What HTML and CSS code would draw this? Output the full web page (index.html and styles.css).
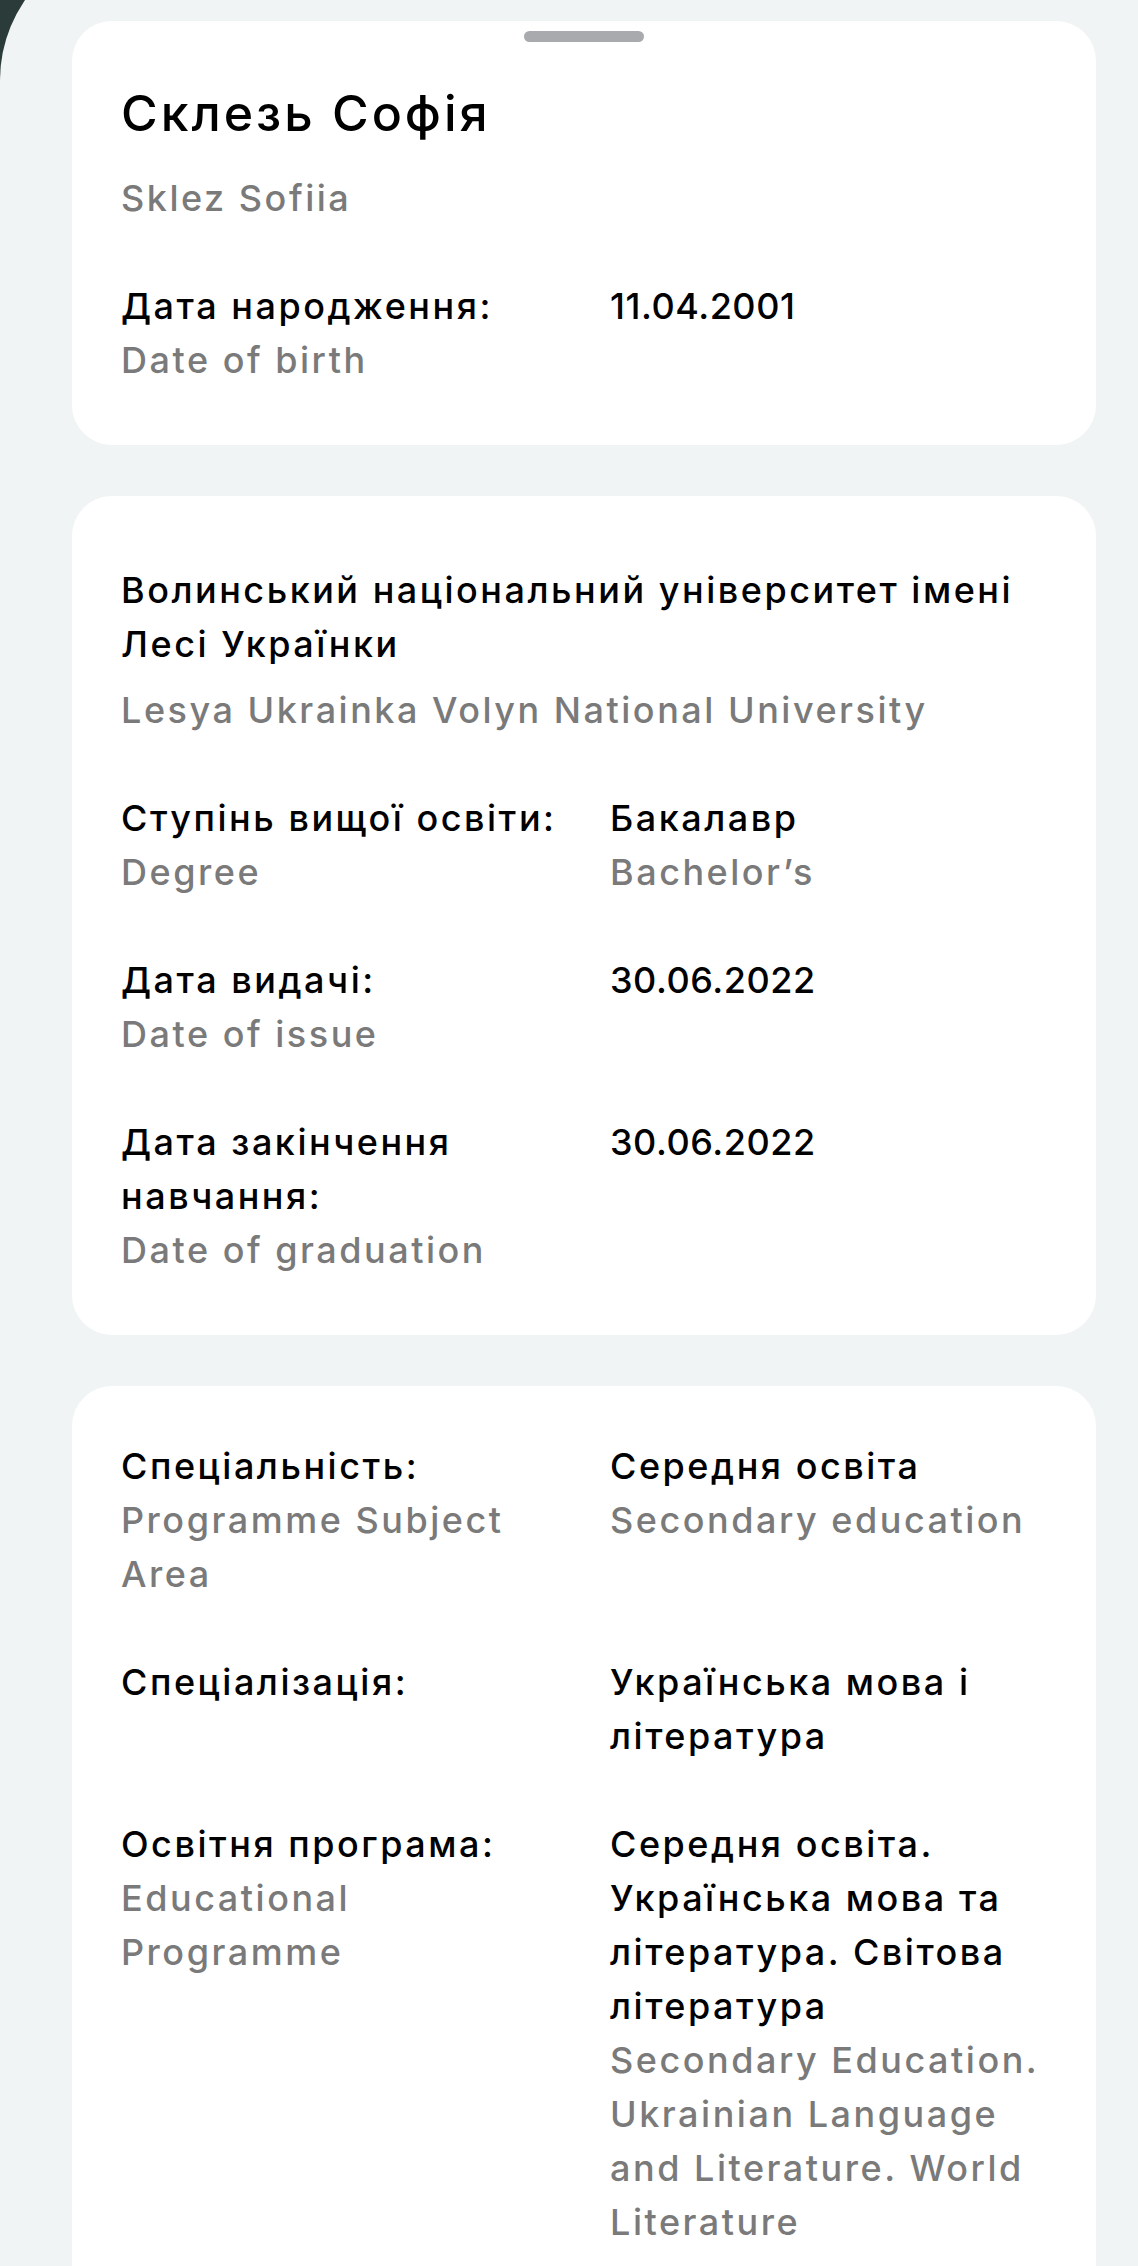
FILE: index.html
```html
<!DOCTYPE html>
<html lang="uk">
<head>
    <meta charset="UTF-8">
    <meta name="viewport" content="width=device-width, initial-scale=1.0">
    <title>Диплом</title>
    <link rel="stylesheet" href="styles.css">
</head>
<body>
    <div class="sheet">
        <!-- owner -->
        <div class="card card-top">
            <div class="handle"></div>
            <h1 class="owner">Склезь Софія</h1>
            <div class="owner-en">Sklez Sofiia</div>
            <div class="rows">
                <div class="row">
                    <div class="label">Дата народження:<span class="en">Date of birth</span></div>
                    <div class="value date">11.04.2001</div>
                </div>
            </div>
        </div>

        <!-- diploma -->
        <div class="card">
            <div class="org">Волинський національний університет імені Лесі Українки</div>
            <div class="org-en">Lesya Ukrainka Volyn National University</div>
            <div class="rows">
                <div class="row">
                    <div class="label">Ступінь вищої освіти:<span class="en">Degree</span></div>
                    <div class="value">Бакалавр<span class="en">Bachelor’s</span></div>
                </div>
                <div class="row">
                    <div class="label">Дата видачі:<span class="en">Date of issue</span></div>
                    <div class="value date">30.06.2022</div>
                </div>
                <div class="row">
                    <div class="label">Дата закінчення навчання:<span class="en">Date of graduation</span></div>
                    <div class="value date">30.06.2022</div>
                </div>
            </div>
        </div>

        <!-- programme -->
        <div class="card">
            <div class="rows">
                <div class="row">
                    <div class="label">Спеціальність:<span class="en">Programme Subject Area</span></div>
                    <div class="value">Середня освіта<span class="en">Secondary education</span></div>
                </div>
                <div class="row">
                    <div class="label">Спеціалізація:</div>
                    <div class="value">Українська мова і література</div>
                </div>
                <div class="row">
                    <div class="label">Освітня програма:<span class="en">Educational Programme</span></div>
                    <div class="value">Середня освіта. Українська мова та література. Світова література<span class="en">Secondary Education. Ukrainian Language and Literature. World Literature</span></div>
                </div>
            </div>
        </div>
    </div>
</body>
</html>
```

FILE: styles.css
```css
html, body {
    margin: 0;
    height: 100%;
    overflow: hidden;
}
body {
    background: #2a3b3a;
    font-family: Inter, "Noto Sans", sans-serif;
    color: #000;
}
.sheet {
    margin-top: -60px;
    min-height: 2400px;
    background: #f1f4f5;
    border-top-left-radius: 140px;
    padding: 81px 42px 0 72px;
    display: flex;
    flex-direction: column;
    gap: 51px;
}
.card {
    background: white;
    border-radius: 40px;
    padding: 53px 49px 58px;
    font-size: 36px;
    font-weight: 500;
    line-height: 54px;
    letter-spacing: 0.07em;
}
.card-top {
    padding-top: 10px;
}
.handle {
    width: 120px;
    height: 11px;
    border-radius: 6px;
    background: #a9aaad;
    margin: 0 auto;
}
.owner {
    margin: 41px 0 0;
    font-size: 50px;
    font-weight: 500;
    line-height: 60px;
    letter-spacing: 0.06em;
}
.owner-en {
    margin-top: 28px;
    color: #7a7a7a;
}
.org {
    margin-top: 14px;
}
.org-en {
    margin-top: 12px;
    color: #7a7a7a;
}
.rows {
    display: flex;
    flex-direction: column;
    gap: 54px;
}
.owner-en + .rows,
.org-en + .rows {
    margin-top: 54px;
}
.row {
    display: grid;
    grid-template-columns: 440px 1fr;
    column-gap: 49px;
}
.date {
    letter-spacing: 0.015em;
}
.en {
    display: block;
    color: #7a7a7a;
}
```
